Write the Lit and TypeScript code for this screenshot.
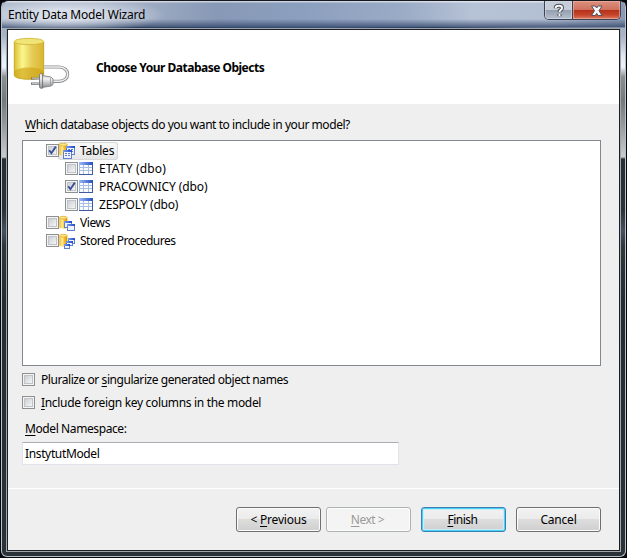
import { LitElement, html, css, svg, nothing } from "lit";
import { customElement, property } from "lit/decorators.js";

@customElement("check-box")
class CheckBox extends LitElement {
  @property({ type: Boolean }) checked = false;
  static styles = css`
    :host { display: block; width: 13px; height: 13px; flex: none; }
    svg { display: block; }
  `;
  render() {
    return html`<svg width="13" height="13" viewBox="0 0 13 13">
      <defs><linearGradient id="g" x1="0" y1="0" x2="1" y2="1">
        <stop offset="0" stop-color="#c8ccd2"></stop><stop offset="1" stop-color="#f8f8f8"></stop>
      </linearGradient></defs>
      <rect x=".5" y=".5" width="12" height="12" fill="#f4f4f4" stroke="#8e8f8f"></rect>
      <rect x="2.5" y="2.5" width="8" height="8" fill="url(#g)" stroke="#c0c4c9"></rect>
      ${this.checked ? svg`<path d="M3.2 6.2 L5.4 9.2 L9.8 2.6" fill="none" stroke="#3c5192" stroke-width="1.9"></path>` : nothing}
    </svg>`;
  }
}

type IconKind = "tables" | "table" | "views" | "procs";

@customElement("tree-icon")
class TreeIcon extends LitElement {
  @property() kind: IconKind = "table";
  static styles = css`
    :host { display: block; width: 16px; height: 16px; flex: none; }
    svg { display: block; }
  `;
  private mini(x: number, y: number, w: number, h: number, dots = false) {
    return svg`<rect x=${x} y=${y} width=${w} height=${h} fill="#5f7fcb"></rect>
      <rect x=${x} y=${y} width=${w} height="2" fill="url(#b)"></rect>
      <rect x=${x + 1} y=${y + 2} width=${w - 2} height=${h - 3} fill="#eef3ff"></rect>
      ${dots ? svg`<path d="M${x + 2} ${y + 3.5}h2m1 0h2M${x + 2} ${y + 5.5}h2m1 0h2" stroke="#5d7fc4" fill="none"></path>` : nothing}`;
  }
  render() {
    if (this.kind === "table") {
      return html`<svg width="16" height="16" viewBox="-1 0 16 16" shape-rendering="crispEdges">
        <defs><linearGradient id="h"><stop offset="0" stop-color="#9db8f8"></stop><stop offset="1" stop-color="#2450c0"></stop></linearGradient></defs>
        <rect x="0" y="1" width="14" height="13" fill="#a9bfe2"></rect>
        <rect x="0" y="1" width="14" height="3" fill="url(#h)"></rect>
        <path d="M13 4h1v10H0v-1h13z" fill="#41599e"></path>
        <path d="M1 4h3v2H1zM5 4h4v2H5zM10 4h3v2h-3zM1 7h3v2H1zM5 7h4v2H5zM10 7h3v2h-3zM1 10h3v3H1zM5 10h4v3H5zM10 10h3v3h-3z" fill="#fbfcff"></path>
      </svg>`;
    }
    const top = this.kind === "tables" ? 0 : 1;
    return html`<svg width="16" height="16" viewBox="0 0 16 16">
      <defs>
        <linearGradient id="y"><stop offset="0" stop-color="#f0b018"></stop><stop offset=".35" stop-color="#fff0a0"></stop><stop offset=".65" stop-color="#f6bd26"></stop><stop offset="1" stop-color="#cf8a08"></stop></linearGradient>
        <linearGradient id="b"><stop offset="0" stop-color="#7d9df0"></stop><stop offset="1" stop-color="#1f48c4"></stop></linearGradient>
      </defs>
      <path d=${`M.3 ${top + 1.5}v9.5c0 2 8 2 8 0v-9.5z`} fill="url(#y)"></path>
      <ellipse cx="4.3" cy=${top + 1.7} rx="3.8" ry="1.4" fill="#ffe681" stroke="#dda62a" stroke-width=".7"></ellipse>
      ${this.kind === "tables" ? svg`${this.mini(7, 3, 9, 9, true)}${this.mini(4, 7, 9, 9, true)}` : nothing}
      ${this.kind === "views" ? svg`${this.mini(5, 6, 8, 7)}${this.mini(8, 9, 8, 7)}` : nothing}
      ${this.kind === "procs" ? svg`${this.mini(9, 5, 7, 6)}${this.mini(7, 8, 7, 5)}${this.mini(5, 11, 6, 5)}` : nothing}
    </svg>`;
  }
}

interface Node { label: string; kind: IconKind; cls: string; checked?: boolean; child?: boolean; selected?: boolean }

const nodes: Node[] = [
  { label: "Tables", kind: "tables", cls: "t1", checked: true, selected: true },
  { label: "ETATY (dbo)", kind: "table", cls: "t2", child: true },
  { label: "PRACOWNICY (dbo)", kind: "table", cls: "t3", child: true, checked: true },
  { label: "ZESPOLY (dbo)", kind: "table", cls: "t4", child: true },
  { label: "Views", kind: "views", cls: "t5" },
  { label: "Stored Procedures", kind: "procs", cls: "t6" },
];

@customElement("app-root")
class AppRoot extends LitElement {
  static styles = css`
    :host { display: block; width: 627px; height: 558px; overflow: hidden; background: #05070c;
      font: 12px/16px "Noto Sans", "Open Sans", sans-serif; color: #000; }
    * { box-sizing: border-box; }
    u { text-decoration: underline; text-underline-offset: 2px; text-decoration-thickness: 1px; text-decoration-skip-ink: none; }
    span, u { white-space: nowrap; }
    .window { display: flex; flex-direction: column; width: 625px; height: 557px; margin-left: 1px; padding: 0 5px 4px; border: 1px solid #b9c2cb; border-top-color: #17191f; border-radius: 7px 7px 6px 6px;
      background: linear-gradient(#8d9ab0 0, #a3afc2 22px, #a7b3c7 35px, #e4eaf4 56px, #eef2fa 66px, #8a9090 76px, #737a7b 100px, #919495 120px, #c9cbcb 156px, #263034 158px, #2a3438 210px, #465160 230px, #2d383b 245px, #242e32 300px, #293338 100%); }
    .title { display: flex; justify-content: space-between; height: 27px; margin: 0 -5px; padding-left: 6px;
      background: radial-gradient(ellipse 100px 18px at 64px 14px, #eef2f8b3 30%, transparent),
        linear-gradient(#ffffff88 0 1px, transparent 2px),
        linear-gradient(90deg, transparent 5px, #2c4064 140px, #3a5078 330px, #2a3d62 430px, #5a6d8c 520px, #7e8ca4 610px) 0 100%/100% 1px no-repeat,
        linear-gradient(transparent 18px, #2c4064c0 26px),
        linear-gradient(90deg, #a9b5c9 0, #a0adc3 140px, #8799b6 215px, #8c9fbe 300px, #9aabc6 400px, #b6c2d6 470px, #b3bfd3 550px, #8b9ab4);
      border-radius: 7px 7px 0 0; }
    .title span { margin-top: 6px; }
    .caption { display: flex; width: 77px; height: 19px; margin-right: 4px; border: 1px solid #3b4354; border-top: 0; border-radius: 0 0 5px 5px; overflow: hidden; }
    .help { width: 28px; border-right: 1px solid #3b4354; box-shadow: inset 0 0 0 1px #d8deea99; background: linear-gradient(#c6ccd8 0 9px, #929dae 9px, #b6bfcd); }
    .close { flex: 1; box-shadow: inset 0 0 0 1px #f1b5a799; background: linear-gradient(#dc9080, #d0705c 9px, #b52f18 9px, #c5462b 14px, #dc7d63); }
    .caption svg { display: block; margin: auto; }
    .client { display: flex; flex-direction: column; flex: 1; border: 1px solid #1b2024; outline: 1px solid #a0a6ac; background: #efefef; margin: 1px 0 1px; }
    .header { display: flex; height: 74px; background: #fff; }
    .header svg { flex: none; display: block; }
    .header span { font-weight: 700; margin: 30px 0 0 23px; }
    .body { display: flex; flex-direction: column; height: 384px; padding: 13px 0 0 14px; }
    .prompt { margin-left: 3px; height: 23px; }
    .tree { width: 579px; height: 226px; border: 1px solid #828790; background: #fff; padding: 1px 0 0 23px; }
    .row { display: flex; align-items: center; height: 18px; }
    .child { padding-left: 19px; }
    .label { display: flex; align-items: center; height: 18px; padding: 0 4px 0 5px; }
    .selected { background: linear-gradient(#fafafa, #e6e6e6); box-shadow: inset 0 0 0 1px #d9d9d9; border-radius: 3px; margin-left: -17px; padding-left: 22px; }
    .row tree-icon { position: relative; z-index: 1; }
    .row check-box { position: relative; z-index: 1; margin-bottom: 1px; }
    .option { display: flex; align-items: center; gap: 6px; height: 23px; }
    .first { margin-top: 2px; }
    .ns { margin: 7px 0 0 3px; height: 21px; }
    .field { display: flex; width: 377px; height: 23px; padding: 3px 0 0 2px; background: #fff; border: 1px solid #e2e3ea; border-top-color: #abadb3; }
    .footer { display: flex; flex: 1; border-top: 1px solid #fff; padding: 18px 18px 0 0; justify-content: flex-end; }
    .btn { display: flex; justify-content: center; width: 85px; height: 25px; padding-top: 4px; border: 1px solid #707070; border-radius: 3px; box-shadow: inset 0 0 0 1px #fcfcfc; background: linear-gradient(#f2f2f2, #ebebeb 50%, #dddddd 50%, #cfcfcf); }
    .prev { margin-right: 5px; }
    .next { margin-right: 10px; color: #9a9a9a; border-color: #adb2b5; background: #f4f4f4; }
    .finish { margin-right: 10px; border-color: #3c7fb1; box-shadow: inset 0 0 0 1px #48d1f8, inset 0 0 0 2px #c9eef8; }
    .l1 { letter-spacing: -.2px; }
    .l2 { letter-spacing: -.5px; }
    .l3 { letter-spacing: -.44px; }
    .l4 { letter-spacing: -.44px; }
    .l5 { letter-spacing: -.325px; }
    .l6 { letter-spacing: -.4px; }
    .l7 { letter-spacing: -.36px; }
    .t1, .t4, .b1, .b4 { letter-spacing: -.2px; }
    .t2 { letter-spacing: .16px; }
    .t3 { letter-spacing: -.08px; }
    .t5 { letter-spacing: -.4px; }
    .t6 { letter-spacing: -.5px; }
    .b2 { letter-spacing: -.5px; margin-right: 2px; }
    .b3 { letter-spacing: -.5px; margin-right: 2px; }
  `;

  private logo() {
    return html`<svg width="65" height="74" viewBox="8 30 65 74">
      <defs>
        <linearGradient id="cy"><stop offset="0" stop-color="#d9bd30"></stop><stop offset=".28" stop-color="#fbf68c"></stop><stop offset=".6" stop-color="#e6cc58"></stop><stop offset="1" stop-color="#d8b52d"></stop></linearGradient>
        <linearGradient id="pl" x1="0" y1="0" x2="0" y2="1"><stop offset="0" stop-color="#d8d8d8"></stop><stop offset=".3" stop-color="#f0f0f0"></stop><stop offset="1" stop-color="#8e9092"></stop></linearGradient>
      </defs>
      <path d="M14 41.5V75C14 81 44 81 44 75V41.5z" fill="url(#cy)"></path>
      <path d="M14 72C16 66 42 66 44 72V75C44 81 14 81 14 75z" fill="#cfa516" opacity=".65"></path>
      <path d="M14.3 41.5V75C14.3 80.6 43.7 80.6 43.7 75V41.5" fill="none" stroke="#c9a726" stroke-width=".8"></path>
      <ellipse cx="29" cy="41.5" rx="14.7" ry="3.2" fill="#f0e477" stroke="#cfb232" stroke-width=".8"></ellipse>
      <path d="M44 67H59C70.5 67 70.5 81.3 59 81.3H52" fill="none" stroke="#8c8e90" stroke-width="3.2"></path>
      <path d="M44 67H59C70.5 67 70.5 81.3 59 81.3H52" fill="none" stroke="#f0f0f0" stroke-width="1.5"></path>
      <path d="M31 78.5H40M31 83.7H40" stroke="#6f6f6f" stroke-width="2.2"></path>
      <path d="M32 78.2H40M32 83.4H40" stroke="#e2e2e2" stroke-width=".8"></path>
      <path d="M42 75.5L51 77L53 79V84.5L51 86L42 87.5z" fill="url(#pl)" stroke="#77797b" stroke-width=".8"></path>
      <path d="M39.5 74.5L40.5 73.4H42.6V88.2H40.5L39.5 87.2z" fill="url(#pl)" stroke="#6d6f72" stroke-width=".8"></path>
      <path d="M50.5 78V85" stroke="#7d7f82" stroke-width=".6"></path>
    </svg>`;
  }

  render() {
    return html`<div class="window">
      <div class="title">
        <span class="l1">Entity Data Model Wizard</span>
        <div class="caption">
          <div class="help"><svg width="27" height="19" viewBox="0 0 27 19"><path d="M10.8 7.3V6.3Q11.1 4.8 14.1 4.8Q17 4.8 17 7Q17 8.3 15.5 9.2Q14.5 9.9 14.5 11.3M14.5 13V15.2" fill="none" stroke="#474e5c" stroke-width="4"></path><path d="M10.8 7.3V6.3Q11.1 4.8 14.1 4.8Q17 4.8 17 7Q17 8.3 15.5 9.2Q14.5 9.9 14.5 11.3M14.5 13V15.2" fill="none" stroke="#f5f5f5" stroke-width="2"></path></svg></div>
          <div class="close"><svg width="47" height="19" viewBox="0 0 47 19"><path d="M18.5 5H22.2L23.7 7L25.2 5H29L26 9.7L29 14.5H25.2L23.7 12.4L22.2 14.5H18.5L21.5 9.7z" fill="#f7f7f7" stroke="#54525e"></path></svg></div>
        </div>
      </div>
      <div class="client">
        <div class="header">${this.logo()}<span class="l2">Choose Your Database Objects</span></div>
        <div class="body">
          <div class="prompt"><span class="l3"><u>W</u>hich database objects do you want to include in your model?</span></div>
          <div class="tree">${nodes.map((n) => html`<div class="row ${n.child ? "child" : ""}">
            <check-box ?checked=${!!n.checked}></check-box><tree-icon kind=${n.kind}></tree-icon>
            <div class="label ${n.selected ? "selected" : ""}"><span class=${n.cls}>${n.label}</span></div>
          </div>`)}</div>
          <div class="option first"><check-box></check-box><span class="l4">Pluralize or <u>s</u>ingularize generated object names</span></div>
          <div class="option"><check-box></check-box><span class="l5"><u>I</u>nclude foreign key columns in the model</span></div>
          <div class="ns"><span class="l6"><u>M</u>odel Namespace:</span></div>
          <div class="field"><span class="l7">InstytutModel</span></div>
        </div>
        <div class="footer">
          <div class="btn prev"><span class="b1">&lt; <u>P</u>revious</span></div>
          <div class="btn next"><span class="b2"><u>N</u>ext &gt;</span></div>
          <div class="btn finish"><span class="b3"><u>F</u>inish</span></div>
          <div class="btn"><span class="b4">Cancel</span></div>
        </div>
      </div>
    </div>`;
  }
}
